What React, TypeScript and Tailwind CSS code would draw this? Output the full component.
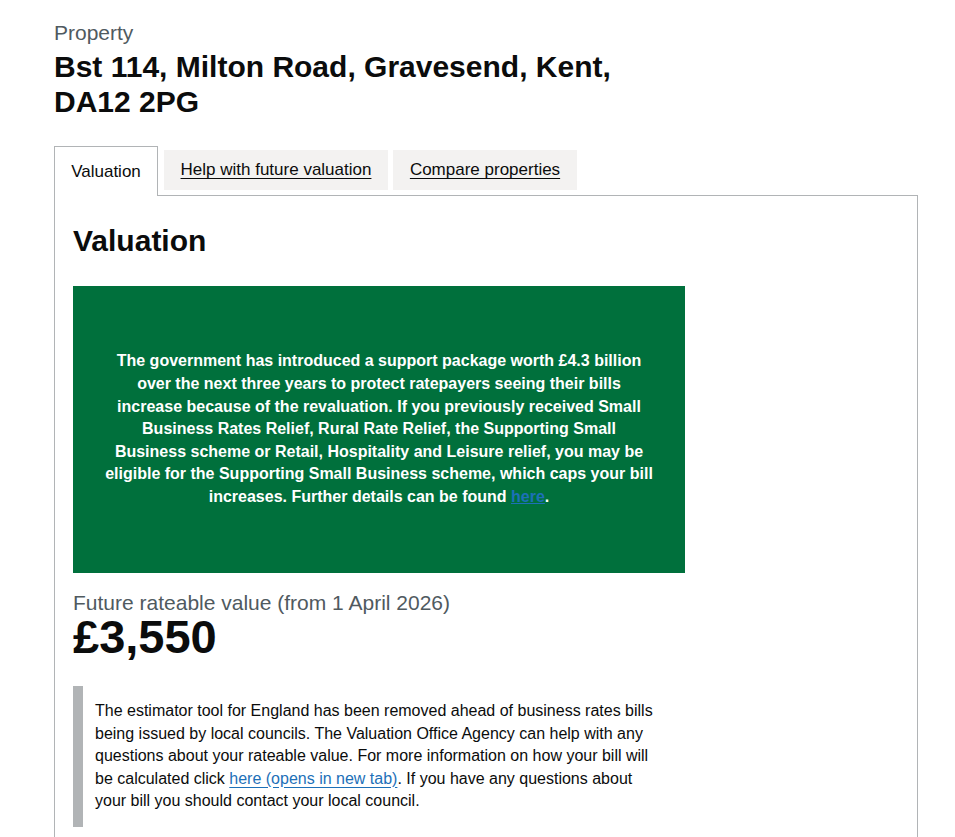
const font = { fontFamily: '"Liberation Sans", Arial, sans-serif' }

const Tabs = (): JSX.Element => {
  return (
    <div className="flex items-start">
      <div className="relative z-10 -mb-px mr-[6px] flex h-[50px] w-[104px] items-center justify-center border border-b-0 border-[#b1b4b6] bg-white text-[17px] text-[#0b0c0c]">
        Valuation
      </div>
      <a
        href="#"
        className="mr-[5px] mt-[4px] flex h-[40px] w-[224px] items-center justify-center bg-[#f3f2f1] text-[17px] text-[#0b0c0c] underline underline-offset-[3px]"
      >
        Help with future valuation
      </a>
      <a
        href="#"
        className="mt-[4px] flex h-[40px] w-[184px] items-center justify-center bg-[#f3f2f1] text-[17px] text-[#0b0c0c] underline underline-offset-[3px]"
      >
        Compare properties
      </a>
    </div>
  )
}

const App = (): JSX.Element => {
  return (
    <div className="min-h-screen bg-white text-[#0b0c0c]" style={font}>
      <div className="ml-[54px] w-[864px] pt-[20px]">
        <span className="block text-[21px] leading-[25px] text-[#505a5f]">Property</span>
        <h1 className="mt-[4px] text-[30px] font-bold leading-[35px]">
          Bst 114, Milton Road, Gravesend, Kent,
          <br />
          DA12 2PG
        </h1>

        <div className="mt-[27px]">
          <Tabs />
          <div className="border border-[#b1b4b6] px-[18px] pb-[30px] pt-[27px]">
            <h2 className="text-[30px] font-bold leading-[35px]">Valuation</h2>

            <div className="mt-[28px] flex h-[287px] w-[612px] items-center justify-center bg-[#00703c] px-[20px]">
              <p className="text-center text-[16px] font-bold leading-[22.6px] text-white">
                The government has introduced a support package worth £4.3 billion
                <br />
                over the next three years to protect ratepayers seeing their bills
                <br />
                increase because of the revaluation. If you previously received Small
                <br />
                Business Rates Relief, Rural Rate Relief, the Supporting Small
                <br />
                Business scheme or Retail, Hospitality and Leisure relief, you may be
                <br />
                eligible for the Supporting Small Business scheme, which caps your bill
                <br />
                increases. Further details can be found{' '}
                <a href="#" className="text-[#1d70b8] underline">
                  here
                </a>
                .
              </p>
            </div>

            <p className="mt-[17px] text-[21px] leading-[25px] text-[#505a5f]">
              Future rateable value (from 1 April 2026)
            </p>
            <p className="text-[47px] font-bold leading-[44px]">£3,550</p>

            <div className="mt-[27px] w-[612px] border-l-[10px] border-[#b1b4b6] py-[14px] pl-[12px] pr-[20px]">
              <p className="text-[16px] leading-[22.5px]">
                The estimator tool for England has been removed ahead of business rates bills
                being issued by local councils. The Valuation Office Agency can help with any
                questions about your rateable value. For more information on how your bill will
                be calculated click{' '}
                <a href="#" className="text-[#1d70b8] underline underline-offset-[3px]">
                  here (opens in new tab)
                </a>
                . If you have any questions about your bill you should contact your local council.
              </p>
            </div>
          </div>
        </div>
      </div>
    </div>
  )
}

export default App
